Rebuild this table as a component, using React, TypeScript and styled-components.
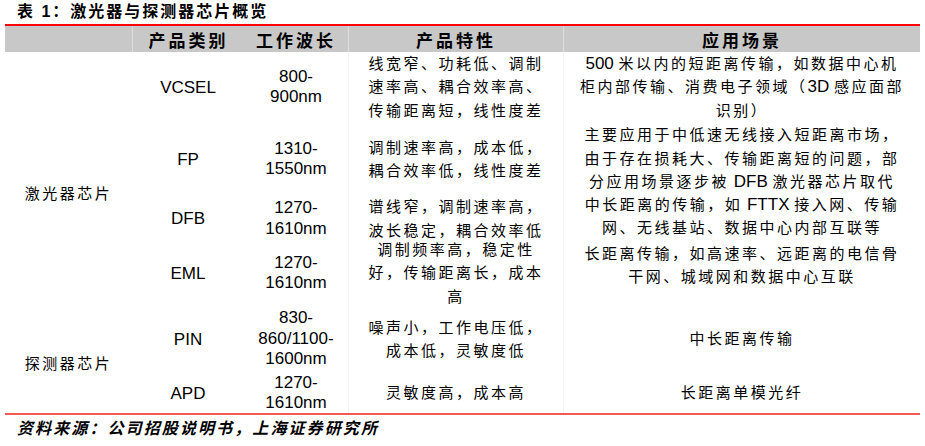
import React from 'react';
import styled, { createGlobalStyle } from 'styled-components';

const MIXED = `"Liberation Sans", "Noto Sans CJK SC", sans-serif`;
const CJK = `"Noto Sans CJK SC", sans-serif`;

const GlobalStyle = createGlobalStyle`
	html, body {
		margin: 0;
		padding: 0;
		background: #fff;
	}
	body {
		font-family: ${MIXED};
		color: #000;
	}
`;

const Page = styled.div`
	width: 925px;
	padding: 0 5px;
	box-sizing: border-box;
`;

const Title = styled.h1`
	margin: 0;
	height: 24px;
	padding-left: 12px;
	font: 700 16px/24px ${MIXED};
	letter-spacing: 2px;
	white-space: nowrap;
`;

const Table = styled.div`
	display: grid;
	grid-template-columns: 127px 112px 104px 215px 357px;
	grid-template-rows: 26px 70px 74px 45px 64px 68px 40px;
	border-top: 2px solid #ff0000;
	border-bottom: 2px solid #f25a5a;
`;

const HeadCell = styled.div<{ $sep?: boolean }>`
	box-sizing: border-box;
	background: #c8c8c8;
	display: flex;
	align-items: center;
	justify-content: center;
	font: 700 17px/1 ${CJK};
	letter-spacing: 3px;
	border-left: ${(p) => (p.$sep ? '1px solid #dcdcdc' : 'none')};
`;

type CellProps = {
	$col: number;
	$row: number;
	$span?: number;
	$dy?: number;
	$sep?: boolean;
};

const Cell = styled.div<CellProps>`
	box-sizing: border-box;
	grid-column: ${(p) => p.$col};
	grid-row: ${(p) => `${p.$row} / span ${p.$span ?? 1}`};
	display: flex;
	flex-direction: column;
	align-items: center;
	justify-content: center;
	text-align: center;
	white-space: nowrap;
	padding-top: ${(p) => Math.max(p.$dy ?? 0, 0)}px;
	padding-bottom: ${(p) => Math.max(-(p.$dy ?? 0), 0)}px;
	border-left: ${(p) => (p.$sep ? '1px solid #f3f3f3' : 'none')};
`;

const Category = styled.div`
	font: 400 15px/23px ${CJK};
	letter-spacing: 2.5px;
`;

const Product = styled.div`
	font: 400 17px/21px ${MIXED};
`;

const Wave = styled.div`
	font: 400 17px/20.5px ${MIXED};
`;

const Lines = styled.div`
	font: 400 15px/23.3px ${MIXED};
	letter-spacing: 2.5px;
`;

const Line = styled.div``;

const Latin = styled.span`
	font-size: 17px;
	letter-spacing: 0;
`;

const Source = styled.div`
	padding-left: 12px;
	font: italic 700 16px/24px ${CJK};
	letter-spacing: 2.1px;
	white-space: nowrap;
`;

type Row = {
	name: string;
	wave: string[];
	feature: string[];
};

const rows: Row[] = [
	{
		name: 'VCSEL',
		wave: ['800-', '900nm'],
		feature: ['线宽窄、功耗低、调制', '速率高、耦合效率高、', '传输距离短，线性度差'],
	},
	{
		name: 'FP',
		wave: ['1310-', '1550nm'],
		feature: ['调制速率高，成本低，', '耦合效率低，线性度差'],
	},
	{
		name: 'DFB',
		wave: ['1270-', '1610nm'],
		feature: ['谱线窄，调制速率高，', '波长稳定，耦合效率低'],
	},
	{
		name: 'EML',
		wave: ['1270-', '1610nm'],
		feature: ['调制频率高，稳定性', '好，传输距离长，成本', '高'],
	},
	{
		name: 'PIN',
		wave: ['830-', '860/1100-', '1600nm'],
		feature: ['噪声小，工作电压低，', '成本低，灵敏度低'],
	},
	{
		name: 'APD',
		wave: ['1270-', '1610nm'],
		feature: ['灵敏度高，成本高'],
	},
];

type Usage = {
	row: number;
	span?: number;
	dy?: number;
	lines: React.ReactNode[];
};

const usages: Usage[] = [
	{
		row: 2,
		lines: [
			<>
				<Latin>500 </Latin>米以内的短距离传输，如数据中心机
			</>,
			<>
				柜内部传输、消费电子领域（<Latin>3D </Latin>感应面部
			</>,
			'识别）',
		],
	},
	{
		row: 3,
		span: 2,
		lines: [
			'主要应用于中低速无线接入短距离市场，',
			'由于存在损耗大、传输距离短的问题，部',
			<>
				分应用场景逐步被<Latin> DFB </Latin>激光器芯片取代
			</>,
			<>
				中长距离的传输，如<Latin> FTTX </Latin>接入网、传输
			</>,
			'网、无线基站、数据中心内部互联等',
		],
	},
	{
		row: 5,
		dy: -16,
		lines: ['长距离传输，如高速率、远距离的电信骨', '干网、城域网和数据中心互联'],
	},
	{ row: 6, lines: ['中长距离传输'] },
	{ row: 7, lines: ['长距离单模光纤'] },
];

export default function App() {
	return (
		<>
			<GlobalStyle />
			<Page>
				<Title>表 1：激光器与探测器芯片概览</Title>
				<Table>
					<HeadCell />
					<HeadCell $sep>产品类别</HeadCell>
					<HeadCell>工作波长</HeadCell>
					<HeadCell $sep>产品特性</HeadCell>
					<HeadCell $sep>应用场景</HeadCell>

					<Cell $col={1} $row={2} $span={4} $dy={27}>
						<Category>激光器芯片</Category>
					</Cell>
					<Cell $col={1} $row={6} $span={2} $dy={6}>
						<Category>探测器芯片</Category>
					</Cell>

					{rows.map((r, i) => (
						<React.Fragment key={r.name}>
							<Cell $col={2} $row={i + 2}>
								<Product>{r.name}</Product>
							</Cell>
							<Cell $col={3} $row={i + 2}>
								{r.wave.map((w) => (
									<Wave key={w}>{w}</Wave>
								))}
							</Cell>
							<Cell $col={4} $row={i + 2} $sep>
								<Lines>
									{r.feature.map((f) => (
										<Line key={f}>{f}</Line>
									))}
								</Lines>
							</Cell>
						</React.Fragment>
					))}

					{usages.map((u) => (
						<Cell
							key={u.row}
							$col={5}
							$row={u.row}
							$span={u.span}
							$dy={u.dy}
							$sep
						>
							<Lines>
								{u.lines.map((l, k) => (
									<Line key={k}>{l}</Line>
								))}
							</Lines>
						</Cell>
					))}
				</Table>
				<Source>资料来源：公司招股说明书，上海证券研究所</Source>
			</Page>
		</>
	);
}
